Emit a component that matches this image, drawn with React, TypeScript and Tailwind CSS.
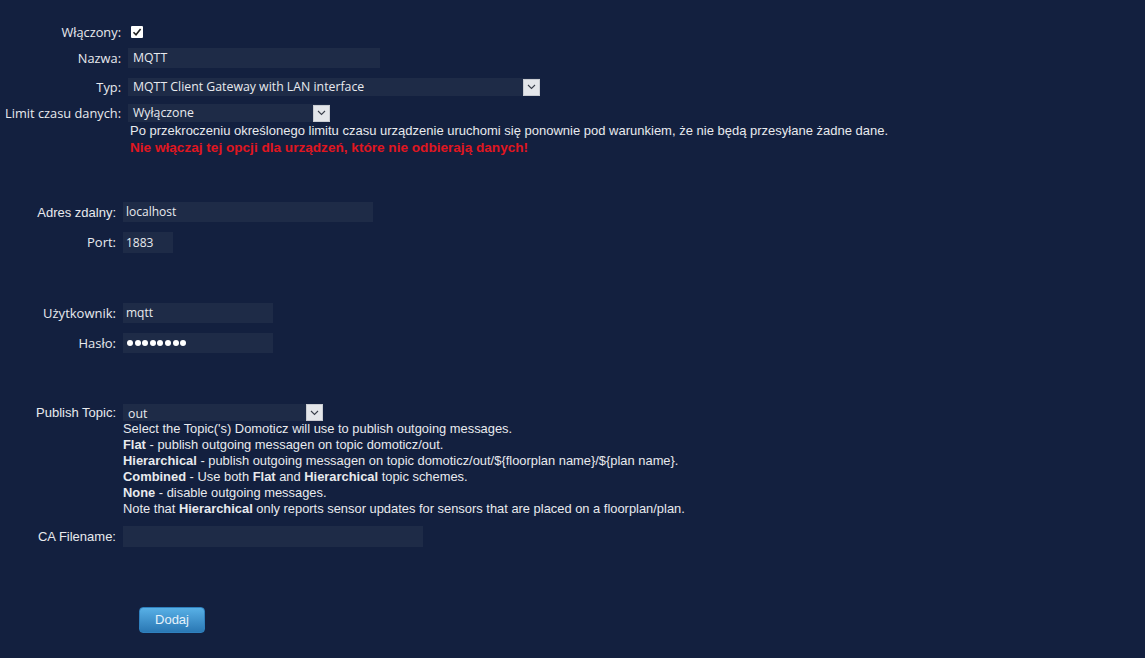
import React from "react";

const seg = { fontFamily: '"Open Sans", "Noto Sans", sans-serif' };
const ari = { fontFamily: '"Liberation Sans", Arial, sans-serif' };

function Arrow() {
  return (
    <div className="w-[17px] h-[17px] bg-[#e4e6ea] border border-[#c9ccd2] flex items-center justify-center">
      <svg width="9" height="6" viewBox="0 0 9 6">
        <path d="M1 1 L4.5 4.5 L8 1" fill="none" stroke="#3a3f4a" strokeWidth="1.1" />
      </svg>
    </div>
  );
}

function Label({ w, children, font, h }: { w: number; children: React.ReactNode; font: React.CSSProperties; h: string }) {
  return (
    <div className={`shrink-0 text-right text-[#e8eaee] flex items-center justify-end pt-[1px] ${h}`} style={{ ...font, width: w }}>
      {children}
    </div>
  );
}

export default function App() {
  return (
    <div className="w-[1145px] h-[658px] bg-[#13203f] text-[#e8eaee] overflow-hidden">
      {/* section 1 */}
      <div className="pt-[24px] text-[12.8px]" style={seg}>
        <div className="flex h-[16px]">
          <Label w={121} font={seg} h="h-[16px]">Włączony:</Label>
          <div className="ml-[10px] mt-[2px] w-[12px] h-[12px] bg-white rounded-[1px] flex items-center justify-center">
            <svg width="10" height="10" viewBox="0 0 10 10">
              <path d="M1.5 5.2 L4 7.7 L8.6 2" fill="none" stroke="#222" strokeWidth="1.6" />
            </svg>
          </div>
        </div>
        <div className="flex mt-[8px]">
          <Label w={121} font={seg} h="h-[20px]">Nazwa:</Label>
          <div className="ml-[7px] w-[252px] h-[20px] bg-[#1e2b47] pl-[5px] flex items-center text-[12.3px]">MQTT</div>
        </div>
        <div className="flex mt-[10px]">
          <Label w={121} font={seg} h="h-[18px]">Typ:</Label>
          <div className="ml-[7px] w-[412px] h-[18px] bg-[#1e2b47] pl-[5px] flex items-center justify-between text-[12.3px]">
            <span>MQTT Client Gateway with LAN interface</span>
            <Arrow />
          </div>
        </div>
        <div className="flex mt-[8px]">
          <Label w={121} font={seg} h="h-[18px]">Limit czasu danych:</Label>
          <div className="ml-[7px] flex flex-col">
            <div className="w-[202px] h-[18px] bg-[#1e2b47] pl-[5px] flex items-center justify-between text-[12.3px]">
              <span className="mt-[1px]">Wyłączone</span>
              <Arrow />
            </div>
            <div className="ml-[2px] text-[13px] leading-[17px]" style={ari}>
              <div>Po przekroczeniu określonego limitu czasu urządzenie uruchomi się ponownie pod warunkiem, że nie będą przesyłane żadne dane.</div>
              <div className="font-bold text-[#e0161f] text-[13.6px]">Nie włączaj tej opcji dla urządzeń, które nie odbierają danych!</div>
            </div>
          </div>
        </div>
      </div>

      {/* section 2 */}
      <div className="mt-[46px] text-[13px]">
        <div className="flex">
          <Label w={116} font={ari} h="h-[20px]">Adres zdalny:</Label>
          <div className="ml-[7px] w-[250px] h-[20px] bg-[#1e2b47] pl-[3px] flex items-center text-[12px]" style={seg}>localhost</div>
        </div>
        <div className="flex mt-[10px]">
          <Label w={116} font={seg} h="h-[21px]">Port:</Label>
          <div className="ml-[7px] w-[50px] h-[21px] bg-[#1e2b47] pl-[3px] flex items-center text-[12px]" style={seg}>1883</div>
        </div>
        <div className="flex mt-[50px]">
          <Label w={116} font={seg} h="h-[20px]">Użytkownik:</Label>
          <div className="ml-[7px] w-[150px] h-[20px] bg-[#1e2b47] pl-[3px] flex items-center text-[12px]" style={seg}>mqtt</div>
        </div>
        <div className="flex mt-[10px]">
          <Label w={116} font={seg} h="h-[20px]">Hasło:</Label>
          <div className="ml-[7px] w-[150px] h-[20px] bg-[#1e2b47] pl-[4px] flex items-center gap-[1.6px]">
            {[0, 1, 2, 3, 4, 5, 6, 7].map((i) => (
              <span key={i} className="w-[6px] h-[6px] rounded-full bg-white inline-block" />
            ))}
          </div>
        </div>
        <div className="flex mt-[51px]">
          <Label w={116} font={ari} h="h-[17px]">Publish Topic:</Label>
          <div className="ml-[7px] flex flex-col">
            <div className="w-[200px] h-[17px] bg-[#1e2b47] pl-[5px] flex items-end justify-between text-[12.3px]" style={seg}>
              <span className="leading-[15px]">out</span>
              <div className="self-start"><Arrow /></div>
            </div>
            <div className="text-[12.9px] leading-[16px]" style={ari}>
              <div>Select the Topic('s) Domoticz will use to publish outgoing messages.</div>
              <div><b>Flat</b> - publish outgoing messagen on topic domoticz/out.</div>
              <div><b>Hierarchical</b> - publish outgoing messagen on topic domoticz/out/${"{floorplan name}"}/${"{plan name}"}.</div>
              <div><b>Combined</b> - Use both <b>Flat</b> and <b>Hierarchical</b> topic schemes.</div>
              <div><b>None</b> - disable outgoing messages.</div>
              <div>Note that <b>Hierarchical</b> only reports sensor updates for sensors that are placed on a floorplan/plan.</div>
            </div>
          </div>
        </div>
        <div className="flex mt-[9px]">
          <Label w={116} font={ari} h="h-[21px]">CA Filename:</Label>
          <div className="ml-[7px] w-[300px] h-[21px] bg-[#1e2b47]" />
        </div>
      </div>

      <div className="mt-[59px] ml-[139px]">
        <button
          className="w-[66px] h-[26px] rounded-[4px] bg-gradient-to-b from-[#58b0e6] to-[#2a78b4] text-[#e6f2fb] text-[13px] border border-[#2f80bd]"
          style={ari}
        >
          Dodaj
        </button>
      </div>
    </div>
  );
}
